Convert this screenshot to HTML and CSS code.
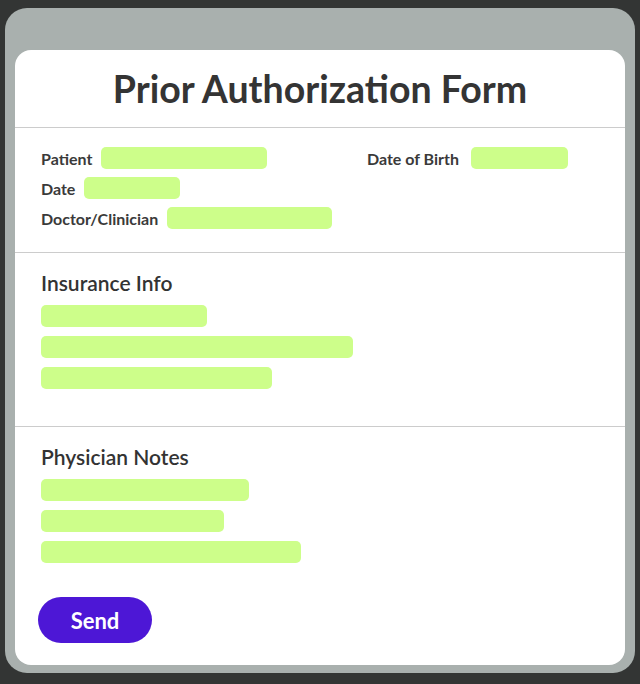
FILE: index.html
```html
<!DOCTYPE html>
<html>

<head>
    <title>Prior Authorization Form</title>
    <meta charset='utf-8' />
    <link rel="stylesheet" href="styles.css">
</head>

<body>
    <div class="frame">
        <div class="card">
            <div class="card-head">
                <h1>Prior Authorization Form</h1>
            </div>

            <div class="section patient">
                <div class="row">
                    <span class="label">Patient</span>
                    <span class="field" style="width:166px"></span>
                </div>
                <div class="row">
                    <span class="label wide">Date of Birth</span>
                    <span class="field" style="width:97px"></span>
                </div>
                <div class="row">
                    <span class="label">Date</span>
                    <span class="field" style="width:96px"></span>
                </div>
                <div class="row"></div>
                <div class="row">
                    <span class="label">Doctor/Clinician</span>
                    <span class="field" style="width:165px"></span>
                </div>
            </div>

            <div class="section">
                <h2>Insurance Info</h2>
                <div class="lines">
                    <span class="field" style="width:166px"></span>
                    <span class="field" style="width:312px"></span>
                    <span class="field" style="width:231px"></span>
                </div>
            </div>

            <div class="section last">
                <h2>Physician Notes</h2>
                <div class="lines">
                    <span class="field" style="width:208px"></span>
                    <span class="field" style="width:183px"></span>
                    <span class="field" style="width:260px"></span>
                </div>
                <button class="send">Send</button>
            </div>
        </div>
    </div>
</body>

</html>
```

FILE: styles.css
```css
body {
    margin: 0;
    background: #333534;
    font-family: "Lato", "Noto Sans", sans-serif;
    color: #333;
}

.frame {
    margin: 8px 5px 11px 5px;
    padding: 42px 10px 8px 10px;
    background: #a9b0ae;
    border-radius: 22px;
}

.card {
    background: #fff;
    border-radius: 16px;
    overflow: hidden;
}

.card-head {
    height: 77px;
    display: flex;
    align-items: center;
    justify-content: center;
    border-bottom: 1px solid #ccc;
}

.card-head h1 {
    margin: 0;
    font-size: 37.5px;
    font-weight: 700;
    color: #343434;
}

.section {
    padding: 18px 26px 37px 26px;
    border-bottom: 1px solid #ccc;
}

.section.last {
    border-bottom: none;
    padding-bottom: 22px;
}

.patient {
    padding: 19px 26px 23px 26px;
    display: grid;
    grid-template-columns: 326px 1fr;
    row-gap: 8px;
}

.row {
    display: flex;
    align-items: center;
    gap: 9px;
    height: 22px;
}

.label {
    font-size: 16px;
    font-weight: 700;
    color: #3a3a3a;
}

.label.wide {
    margin-right: 3px;
}

.field {
    display: block;
    height: 22px;
    background: #cdfe8a;
    border-radius: 5px;
}

.section h2 {
    margin: 0 0 10px 0;
    font-size: 21px;
    font-weight: 600;
    line-height: 24px;
    color: #333;
}

.lines {
    display: flex;
    flex-direction: column;
    gap: 9px;
}

.send {
    margin: 34px 0 0 -3px;
    width: 114px;
    height: 46px;
    border: none;
    border-radius: 23px;
    background: #4d17d6;
    color: #fff;
    font-family: inherit;
    font-size: 22px;
    font-weight: 700;
}
```
